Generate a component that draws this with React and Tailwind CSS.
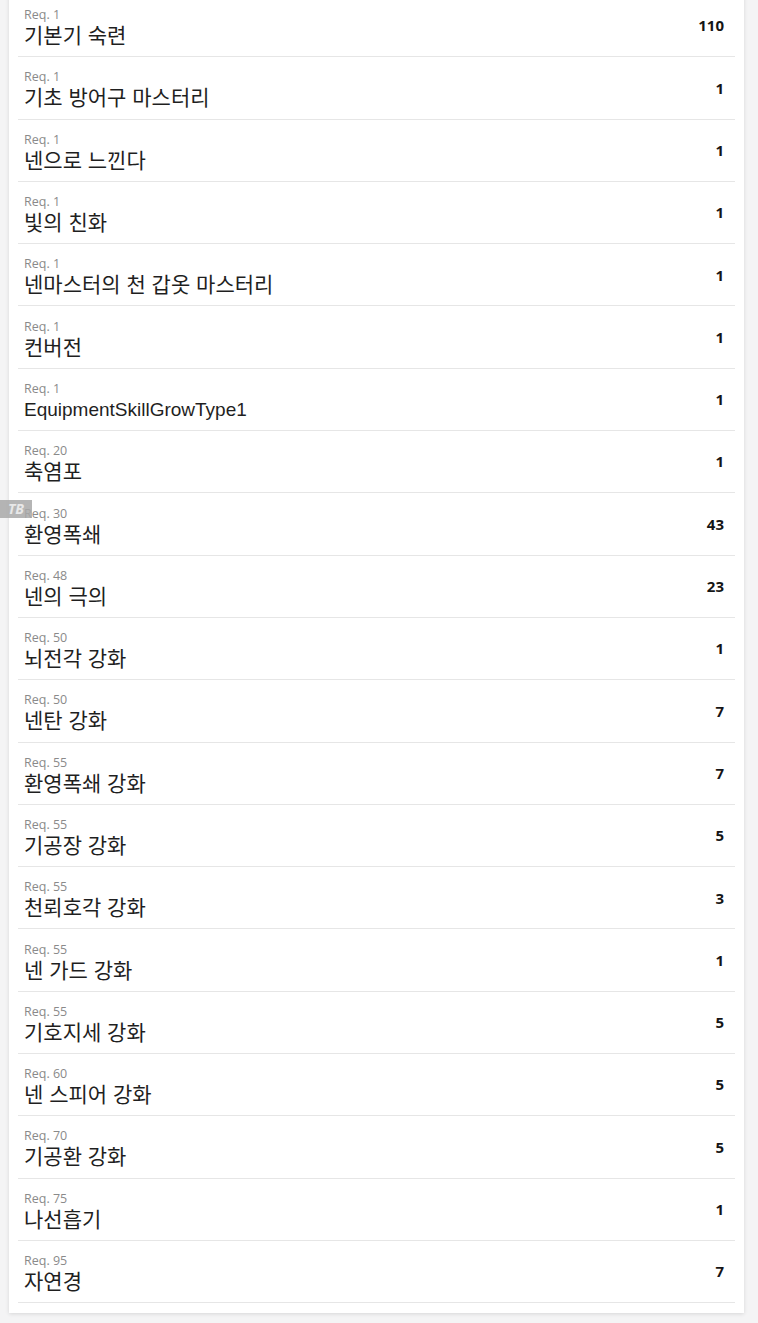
import React from "react";

const skills = [
    { req: 1, name: "기본기 숙련", count: 110 },
    { req: 1, name: "기초 방어구 마스터리", count: 1 },
    { req: 1, name: "넨으로 느낀다", count: 1 },
    { req: 1, name: "빛의 친화", count: 1 },
    { req: 1, name: "넨마스터의 천 갑옷 마스터리", count: 1 },
    { req: 1, name: "컨버전", count: 1 },
    { req: 1, name: "EquipmentSkillGrowType1", count: 1, latin: true },
    { req: 20, name: "축염포", count: 1 },
    { req: 30, name: "환영폭쇄", count: 43 },
    { req: 48, name: "넨의 극의", count: 23 },
    { req: 50, name: "뇌전각 강화", count: 1 },
    { req: 50, name: "넨탄 강화", count: 7 },
    { req: 55, name: "환영폭쇄 강화", count: 7 },
    { req: 55, name: "기공장 강화", count: 5 },
    { req: 55, name: "천뢰호각 강화", count: 3 },
    { req: 55, name: "넨 가드 강화", count: 1 },
    { req: 55, name: "기호지세 강화", count: 5 },
    { req: 60, name: "넨 스피어 강화", count: 5 },
    { req: 70, name: "기공환 강화", count: 5 },
    { req: 75, name: "나선흡기", count: 1 },
    { req: 95, name: "자연경", count: 7 },
];

const SkillRow = ({ skill }) => (
    <li className="flex h-[62.3px] items-center justify-between border-b border-[#e6e6e6] pl-[6px] pr-[11px]">
        <div className="flex flex-col pt-[5px]">
            <span className="text-[12.5px] leading-[16px] text-[#8a8a8a]">Req. {skill.req}</span>
            <span
                className={`leading-[26px] text-[#1f1f1f] ${skill.latin ? "text-[19px]" : "text-[21px]"}`}
                style={{ fontFamily: '"Liberation Sans", "Noto Sans CJK KR", sans-serif' }}
            >
                {skill.name}
            </span>
        </div>
        <span className="text-[15px] font-bold text-[#151515]">{skill.count}</span>
    </li>
);

export default function App() {
    return (
        <div
            className="relative min-h-[1323px] overflow-hidden bg-[#f4f4f5]"
            style={{ fontFamily: '"Open Sans", "Noto Sans CJK KR", sans-serif' }}
        >
            <div className="-mt-[5px] ml-[9px] mr-[14px] bg-white px-[9px] pb-[10px] shadow-[0_1px_4px_rgba(0,0,0,0.12)]">
                <ul>
                    {skills.map((skill, i) => (
                        <SkillRow key={i} skill={skill} />
                    ))}
                </ul>
            </div>

            {/* translator badge overlay */}
            <div className="absolute left-0 top-[500px] flex h-[18px] w-[32px] items-center justify-center bg-[#a8a8a8]/85 text-[14px] font-bold italic leading-none text-[#e8e8e8]">
                TB
            </div>
        </div>
    );
}
